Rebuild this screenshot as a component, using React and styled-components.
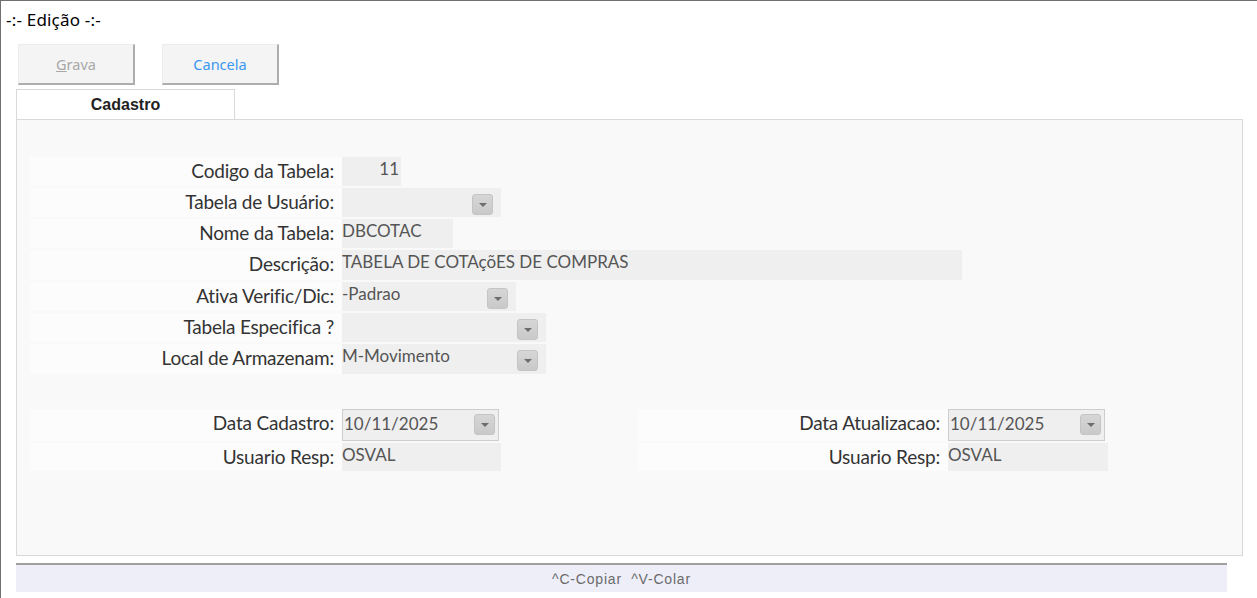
import React from "react";
import styled, { createGlobalStyle } from "styled-components";

const GlobalStyle = createGlobalStyle`
  html, body {
    margin: 0;
    padding: 0;
    background: #ffffff;
  }
  * {
    box-sizing: border-box;
  }
`;

const Window = styled.div`
  height: 598px;
  border-top: 1px solid #6f6f6f;
  border-left: 1px solid #6f6f6f;
  background: #ffffff;
  font-family: "Lato", "Noto Sans", sans-serif;
  overflow: hidden;
`;

const Title = styled.div`
  height: 43px;
  padding: 8px 0 0 5px;
  font-family: "Noto Sans", "Open Sans", sans-serif;
  font-size: 17px;
  line-height: 22px;
  letter-spacing: 0.2px;
  color: #000;
`;

const Toolbar = styled.div`
  display: flex;
  gap: 27px;
  padding-left: 17px;
  height: 45px;
`;

const ToolButton = styled.button`
  width: 117px;
  height: 41px;
  border: none;
  border-right: 2px solid #adadad;
  border-bottom: 2px solid #adadad;
  border-top: 1px solid #ececec;
  border-left: 1px solid #ececec;
  background: #f4f4f4;
  font-family: "Noto Sans", "Open Sans", sans-serif;
  font-size: 14.5px;
  color: ${(p) => (p.$disabled ? "#a8a8a8" : "#3a98f0")};
  padding: 0;
  cursor: default;

  u {
    text-decoration: underline;
  }
`;

const TabBar = styled.div`
  display: flex;
  padding-left: 15px;
`;

const Tab = styled.div`
  width: 219px;
  height: 30px;
  border: 1px solid #d9d9d9;
  border-bottom: none;
  background: #ffffff;
  display: flex;
  align-items: center;
  justify-content: center;
  font-family: "Liberation Sans", Arial, sans-serif;
  font-weight: bold;
  font-size: 16px;
  color: #222;
  padding-top: 1px;
`;

const Panel = styled.div`
  margin-left: 15px;
  width: 1227px;
  height: 437px;
  border: 1px solid #d9d9d9;
  background: #f9f9f9;
  padding: 37px 0 0 13px;
`;

const Section = styled.div`
  display: flex;
  flex-direction: column;
  gap: 2px;
`;

const Row = styled.div`
  display: flex;
  height: ${(p) => p.$h || 29}px;
`;

const Label = styled.div`
  width: ${(p) => p.$w || 312}px;
  background: #fcfcfc;
  text-align: right;
  padding-right: 8px;
  font-size: 19px;
  line-height: 27px;
  color: #333;
  letter-spacing: -0.2px;
  white-space: nowrap;
`;

const Field = styled.div`
  position: relative;
  width: ${(p) => p.$w}px;
  background: #efefef;
  border: ${(p) => (p.$bordered ? "1px solid #cdcdcd" : "none")};
  font-size: 17px;
  line-height: ${(p) => (p.$bordered ? 28 : 24)}px;
  padding: 0 ${(p) => (p.$right ? 2 : 0)}px 0 ${(p) => (p.$bordered ? 1 : 0)}px;
  color: #555;
  text-align: ${(p) => (p.$right ? "right" : "left")};
  white-space: nowrap;
`;

const Drop = styled.span`
  position: absolute;
  right: ${(p) => p.$r || 8}px;
  top: ${(p) => p.$t || 6}px;
  width: 21px;
  height: 21px;
  border: 1px solid #c4c4c4;
  border-radius: 3px;
  background: linear-gradient(#d6d6d6, #c9c9c9);
  display: flex;
  align-items: center;
  justify-content: center;

  &::after {
    content: "";
    width: 0;
    height: 0;
    border-left: 4px solid transparent;
    border-right: 4px solid transparent;
    border-top: 4px solid #6d6d6d;
    margin-top: 1px;
  }
`;

const Columns = styled.div`
  display: flex;
  margin-top: 35px;
`;

const Column = styled.div`
  display: flex;
  flex-direction: column;
  gap: 2px;
  width: ${(p) => p.$w}px;
`;

const Footer = styled.div`
  margin: 7px 0 0 15px;
  width: 1211px;
  height: 29px;
  border-top: 2px solid #a0a0a0;
  background: #eeeef9;
  display: flex;
  align-items: center;
  justify-content: center;
`;

const FooterText = styled.span`
  display: inline-block;
  font-family: "Liberation Sans", Arial, sans-serif;
  font-size: 14px;
  letter-spacing: 0.8px;
  color: #6a6a6a;
  white-space: pre;
`;

const App = () => {
  return (
    <>
      <GlobalStyle />
      <Window>
        <Title>-:- Edição -:-</Title>
        <Toolbar>
          <ToolButton $disabled>
            <u>G</u>rava
          </ToolButton>
          <ToolButton>Cancela</ToolButton>
        </Toolbar>
        <TabBar>
          <Tab>Cadastro</Tab>
        </TabBar>
        <Panel>
          <Section>
            <Row>
              <Label>Codigo da Tabela:</Label>
              <Field $w={59} $right>
                11
              </Field>
            </Row>
            <Row>
              <Label>Tabela de Usuário:</Label>
              <Field $w={159}>
                <Drop />
              </Field>
            </Row>
            <Row>
              <Label>Nome da Tabela:</Label>
              <Field $w={111}>DBCOTAC</Field>
            </Row>
            <Row $h={30}>
              <Label>Descrição:</Label>
              <Field $w={620}>TABELA DE COTAçõES DE COMPRAS</Field>
            </Row>
            <Row>
              <Label>Ativa Verific/Dic:</Label>
              <Field $w={174}>
                -Padrao
                <Drop />
              </Field>
            </Row>
            <Row>
              <Label>Tabela Especifica ?</Label>
              <Field $w={204}>
                <Drop />
              </Field>
            </Row>
            <Row $h={30}>
              <Label>Local de Armazenam:</Label>
              <Field $w={204}>
                M-Movimento
                <Drop />
              </Field>
            </Row>
          </Section>
          <Columns>
            <Column $w={608}>
              <Row $h={32}>
                <Label>Data Cadastro:</Label>
                <Field $w={157} $bordered>
                  10/11/2025
                  <Drop $r={3} $t={4} />
                </Field>
              </Row>
              <Row $h={28}>
                <Label>Usuario Resp:</Label>
                <Field $w={159}>OSVAL</Field>
              </Row>
            </Column>
            <Column $w={480}>
              <Row $h={32}>
                <Label $w={310}>Data Atualizacao:</Label>
                <Field $w={157} $bordered>
                  10/11/2025
                  <Drop $r={3} $t={4} />
                </Field>
              </Row>
              <Row $h={28}>
                <Label $w={310}>Usuario Resp:</Label>
                <Field $w={160}>OSVAL</Field>
              </Row>
            </Column>
          </Columns>
        </Panel>
        <Footer>
          <FooterText>^C-Copiar  ^V-Colar</FooterText>
        </Footer>
      </Window>
    </>
  );
};

export default App;
